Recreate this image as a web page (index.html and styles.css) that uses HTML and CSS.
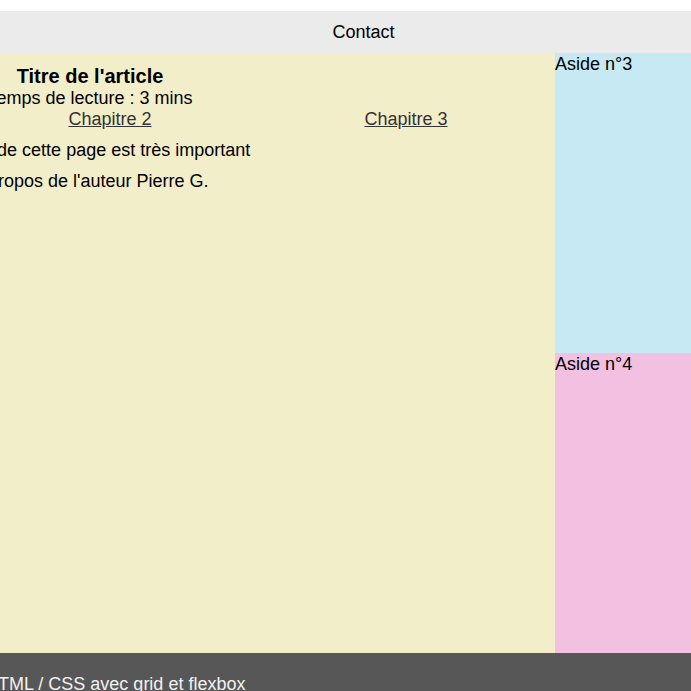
FILE: index.html
```html
<!DOCTYPE html>
<html lang="fr">
<head>
<meta charset="utf-8">
<title>Grid et flexbox</title>
<link rel="stylesheet" href="styles.css">
</head>
<body>
<div class="page">
  <div class="topbar"></div>
  <nav class="nav"><a class="nav-link" href="#">Contact</a></nav>
  <div class="layout">
    <main class="main">
      <div class="article">
        <header class="article-head">
          <h1 class="title">Titre de l'article</h1>
          <p class="reading">Temps de lecture : 3 mins</p>
        </header>
        <nav class="chapters">
          <a href="#">Chapitre 1</a>
          <a href="#">Chapitre 2</a>
          <a href="#">Chapitre 3</a>
        </nav>
        <p class="text intro">Le contenu de cette page est très important</p>
        <p class="text author">À propos de l'auteur Pierre G.</p>
      </div>
    </main>
    <aside class="aside aside-3">Aside n°3</aside>
    <aside class="aside aside-4">Aside n°4</aside>
  </div>
  <footer class="footer"><span class="footer-text">HTML / CSS avec grid et flexbox</span></footer>
</div>
</body>
</html>
```

FILE: styles.css
```css
html, body {
  margin: 0;
  padding: 0;
  overflow: hidden;
  background: #ffffff;
}
body {
  font-family: "Liberation Sans", Arial, sans-serif;
  font-size: 18px;
  color: #000;
}
.page {
  width: 691px;
  overflow: hidden;
}
.topbar {
  height: 11px;
  background: #ffffff;
}
.nav {
  height: 42px;
  background: #ebebeb;
  display: flex;
  align-items: center;
  justify-content: center;
  padding-left: 36px;
}
.nav-link {
  color: #000;
  text-decoration: none;
}
.layout {
  display: grid;
  grid-template-columns: 555px 136px;
  grid-template-rows: 300px 300px;
}
.main {
  grid-row: 1 / 3;
  background: #f3eeca;
  overflow: hidden;
}
.article {
  width: 888px;
  margin-left: -334px;
  padding-top: 12px;
}
.article-head {
  margin-right: 40px;
  text-align: center;
}
.title {
  margin: 0;
  font-size: 20px;
  font-weight: bold;
  line-height: 23px;
}
.reading {
  margin: 0;
  line-height: 21px;
}
.chapters {
  display: flex;
  justify-content: space-around;
  line-height: 21px;
}
.chapters a {
  color: #333333;
  text-decoration: underline;
}
.text {
  margin: 10px 0 0;
  line-height: 21px;
}
.intro {
  margin-left: 237px;
}
.author {
  margin-left: 305px;
}
.aside {
  line-height: 21px;
  padding-top: 1px;
}
.aside-3 {
  background: #c7e9f3;
}
.aside-4 {
  background: #f2c0e0;
}
.footer {
  height: 37px;
  background: #575757;
  color: #f2f2f2;
  padding-top: 21px;
  line-height: 21px;
  white-space: nowrap;
}
.footer-text {
  margin-left: -15px;
}
```
